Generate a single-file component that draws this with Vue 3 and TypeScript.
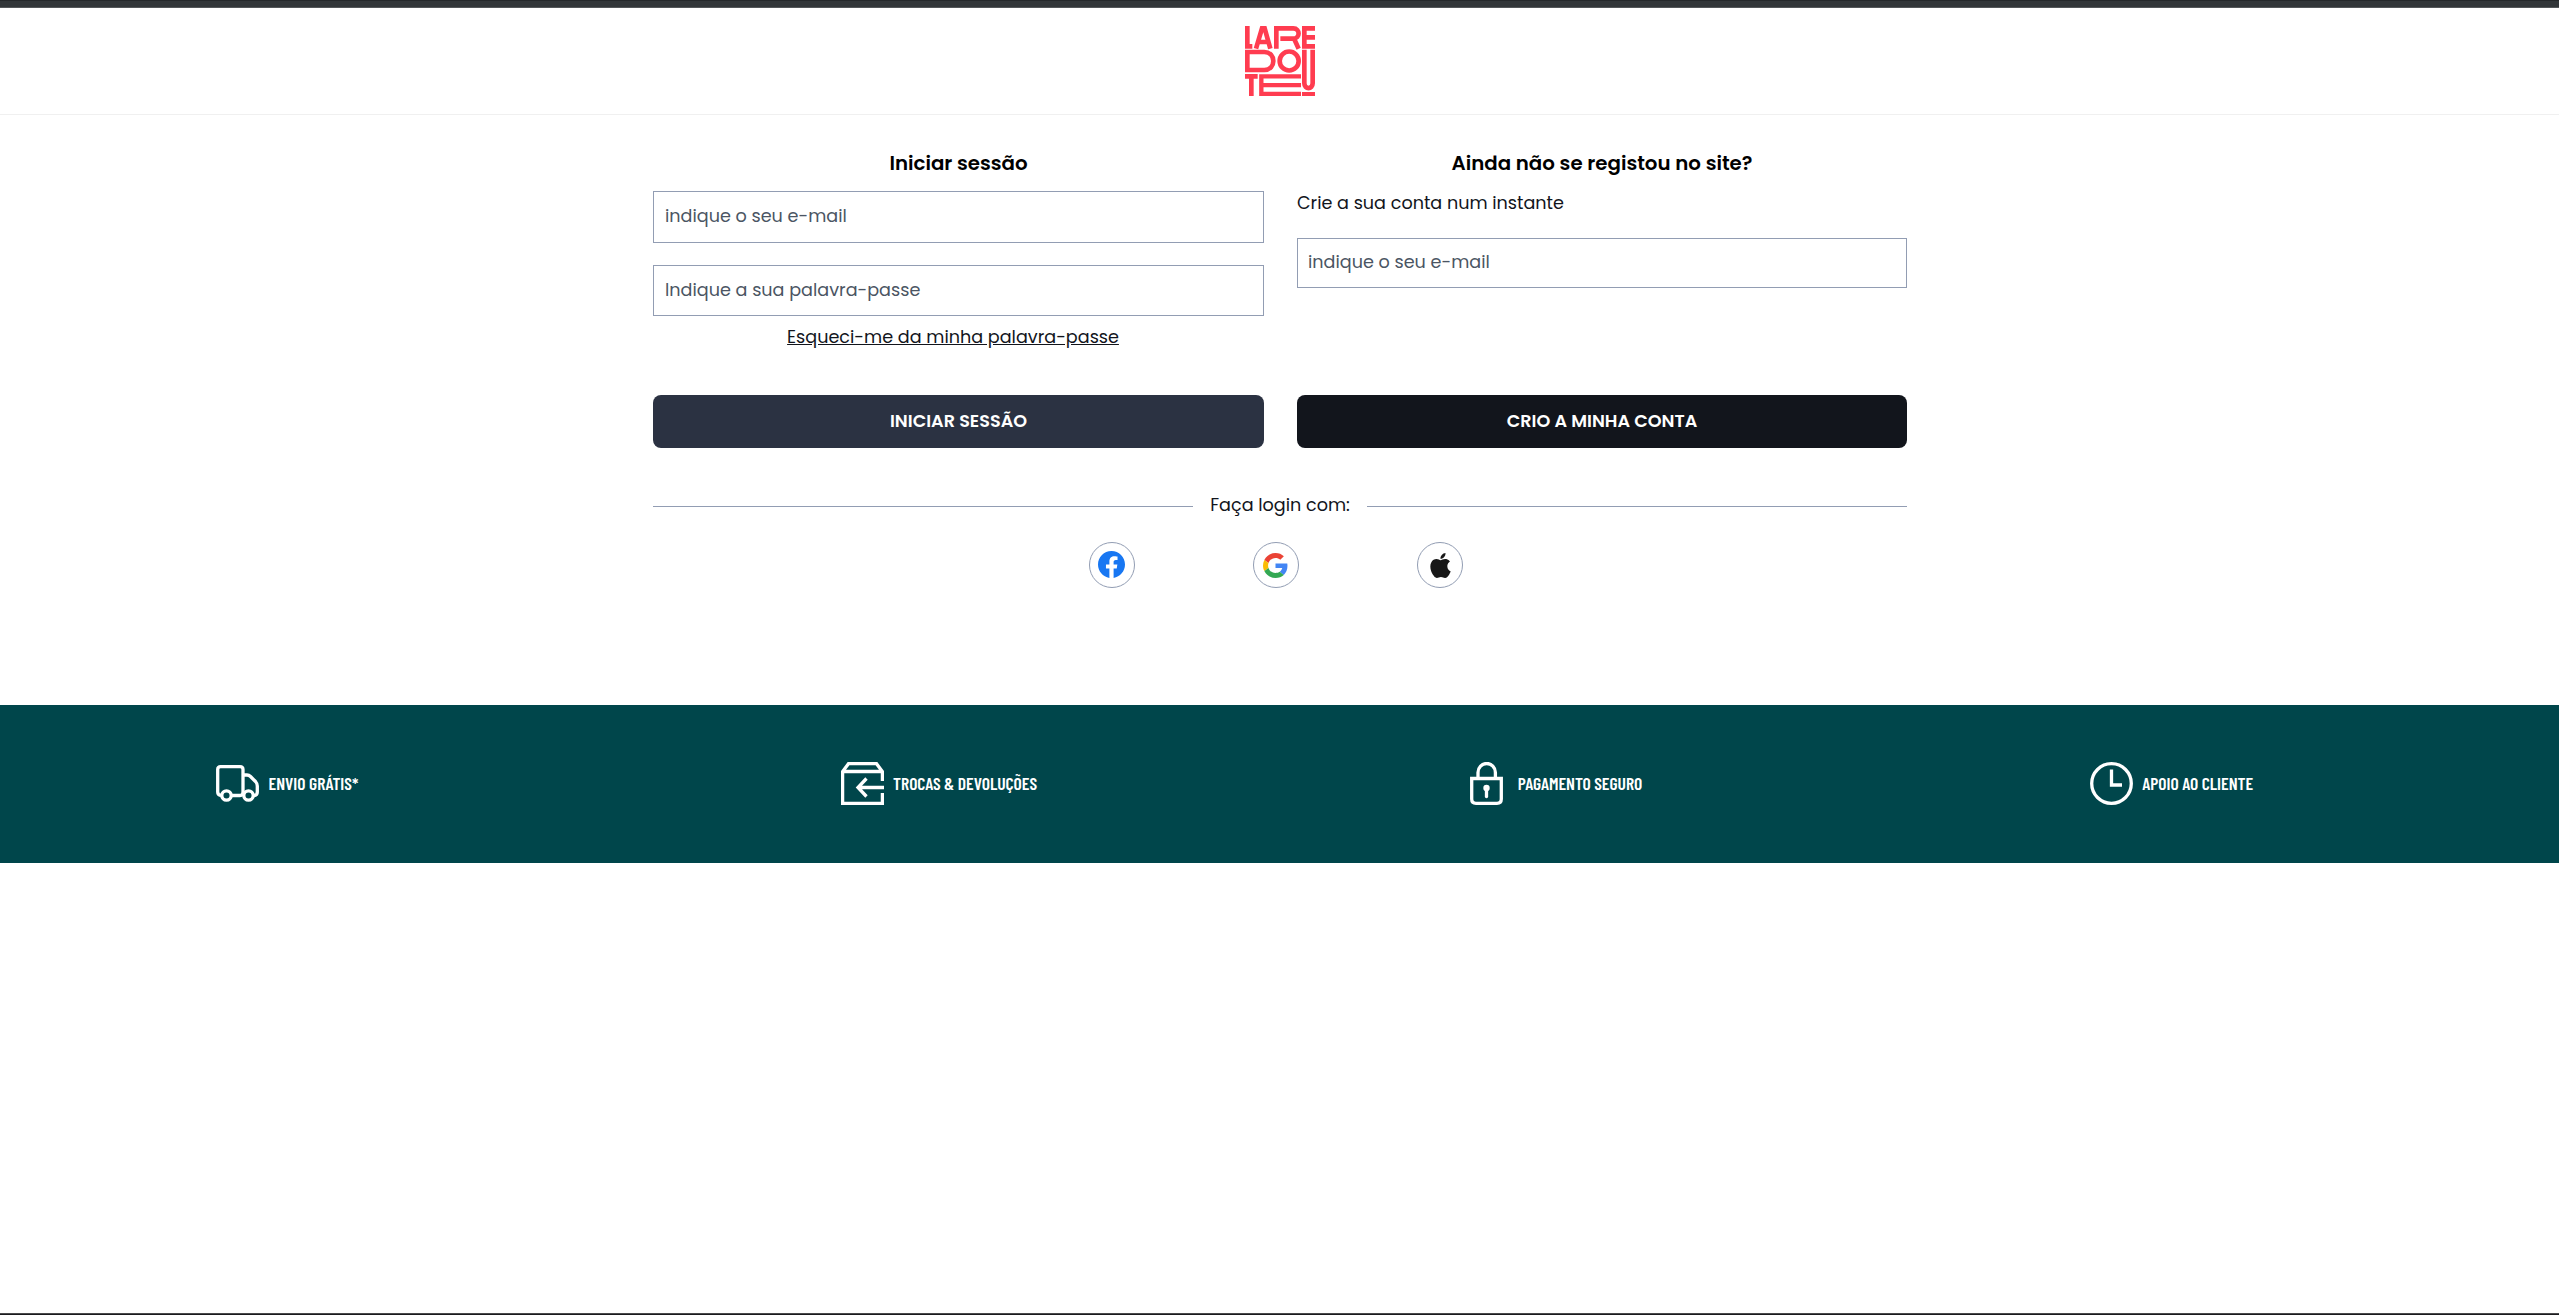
<script setup lang="ts">
import { ref } from 'vue'

const email = ref('')
const password = ref('')
const newEmail = ref('')

type Service = { icon: 'truck' | 'box' | 'lock' | 'clock'; label: string }

const services: Service[] = [
  { icon: 'truck', label: 'ENVIO GRÁTIS*' },
  { icon: 'box', label: 'TROCAS & DEVOLUÇÕES' },
  { icon: 'lock', label: 'PAGAMENTO SEGURO' },
  { icon: 'clock', label: 'APOIO AO CLIENTE' },
]
</script>

<template>
  <div class="page">
    <div class="topbar"></div>
    <header class="header">
      <svg class="logo" viewBox="0 0 210 210" role="img" aria-label="La Redoute">
        <g fill="none" stroke="#ff3c50" stroke-width="14">
          <path d="M7 0V61H22" />
          <path d="M33 68L51 7H59L76 68M39 48H70" />
          <path d="M94 68V7H145C166 7 166 38 145 38H106M148 40L161 68" />
          <path d="M210 7H178V61H210M178 34H210" />
          <path d="M7 78V132H58C94 132 94 78 58 78H7Z" />
          <circle cx="132.500" cy="105" r="28.500" />
          <path d="M178 71V172C178 191 203 191 203 172V71" />
          <path d="M171 204H210" stroke-width="12" />
          <path d="M0 151H38M19 151V210" />
          <path d="M168 151H49V204H168M49 177.500H168" stroke-width="13" />
        </g>
      </svg>
    </header>

    <main class="main">
      <div class="forms">
        <form class="form" @submit.prevent>
          <h2>Iniciar sessão</h2>
          <input v-model="email" class="first" type="email" placeholder="indique o seu e-mail" />
          <input v-model="password" class="second" type="password" placeholder="Indique a sua palavra-passe" />
          <a class="forgot">Esqueci-me da minha palavra-passe</a>
          <button class="login" type="submit">INICIAR SESSÃO</button>
        </form>
        <form class="form" @submit.prevent>
          <h2>Ainda não se registou no site?</h2>
          <p>Crie a sua conta num instante</p>
          <input v-model="newEmail" class="new" type="email" placeholder="indique o seu e-mail" />
          <button type="submit">CRIO A MINHA CONTA</button>
        </form>
      </div>

      <div class="divider"><i></i><span>Faça login com:</span><i></i></div>

      <div class="social">
        <a class="round facebook">
          <svg viewBox="0 0 24 24" width="27" height="27">
            <path fill="#1877f2" d="M24 12.073C24 5.405 18.627 0 12 0S0 5.405 0 12.073C0 18.100 4.388 23.094 10.125 24v-8.437H7.078v-3.490h3.047V9.413c0-3.026 1.792-4.697 4.533-4.697 1.312 0 2.686.236 2.686.236v2.971H15.830c-1.491 0-1.956.930-1.956 1.886v2.264h3.328l-.532 3.490h-2.796V24C19.612 23.094 24 18.100 24 12.073z" />
          </svg>
        </a>
        <a class="round google">
          <svg viewBox="0 0 48 48" width="25" height="25">
            <path fill="#ea4335" d="M24 9.500c3.540 0 6.710 1.220 9.210 3.600l6.850-6.850C35.900 2.380 30.470 0 24 0 14.620 0 6.510 5.380 2.560 13.220l7.980 6.190C12.430 13.720 17.740 9.500 24 9.500z" />
            <path fill="#4285f4" d="M46.980 24.550c0-1.570-.150-3.090-.380-4.550H24v9.020h12.940c-.580 2.960-2.260 5.480-4.780 7.180l7.730 6c4.510-4.180 7.090-10.360 7.090-17.650z" />
            <path fill="#fbbc05" d="M10.530 28.590c-.480-1.450-.760-2.990-.760-4.590s.270-3.140.760-4.590l-7.980-6.190C.920 16.460 0 20.120 0 24c0 3.880.920 7.540 2.560 10.780l7.970-6.190z" />
            <path fill="#34a853" d="M24 48c6.480 0 11.930-2.130 15.890-5.810l-7.730-6c-2.150 1.450-4.920 2.300-8.160 2.300-6.260 0-11.570-4.220-13.470-9.910l-7.980 6.190C6.510 42.620 14.620 48 24 48z" />
          </svg>
        </a>
        <a class="round">
          <svg viewBox="0 0 24 24" width="25" height="25">
            <path fill="#181818" d="M12.152 6.896c-.948 0-2.415-1.078-3.960-1.040-2.040.027-3.910 1.183-4.961 3.014-2.117 3.675-.546 9.103 1.519 12.090 1.013 1.454 2.208 3.090 3.792 3.039 1.520-.065 2.090-.987 3.935-.987 1.831 0 2.350.987 3.960.948 1.637-.026 2.676-1.480 3.676-2.948 1.156-1.688 1.636-3.325 1.662-3.415-.039-.013-3.182-1.221-3.220-4.857-.026-3.040 2.480-4.494 2.597-4.559-1.429-2.090-3.623-2.324-4.390-2.376-2-.156-3.675 1.090-4.610 1.090zM15.530 3.830c.843-1.012 1.400-2.427 1.245-3.830-1.207.052-2.662.805-3.532 1.818-.780.896-1.454 2.338-1.273 3.714 1.338.104 2.715-.688 3.559-1.701" />
          </svg>
        </a>
      </div>
    </main>

    <section class="services">
      <div v-for="s in services" :key="s.icon" class="service">
        <svg viewBox="0 0 43 43" fill="none" stroke="#fff" stroke-width="3.300">
          <g v-if="s.icon === 'truck'">
            <path d="M5 33.500Q1.700 33 1.700 30V7.600Q1.700 4.600 4.700 4.600H24Q27 4.600 27 7.600V30Q27 33.500 24 33.500H16M27 13H31Q33 13 34.500 14.500L39.500 19.500Q41.300 21.500 41.300 24V30Q41.300 33.500 38 33.500" />
            <circle cx="10.500" cy="33.500" r="4.700" />
            <circle cx="32.500" cy="33.500" r="4.700" />
          </g>
          <g v-else-if="s.icon === 'box'">
            <path d="M41.400 19V9.500L35.500 1.700H7.500L1.600 9.500V41.400H41.400V31M1.600 9.500H41.400M43 25.500H17.500M25.500 16.500L17 25.500L25.500 34.500" />
          </g>
          <g v-else-if="s.icon === 'lock'">
            <path d="M6.700 16.500H36.300V37Q36.300 41.300 32 41.300H11Q6.700 41.300 6.700 37ZM13 16.500V10.500A8.700 9 0 0 1 30.400 10.500V16.500" />
            <circle cx="21.500" cy="26" r="3.200" fill="#fff" stroke="none" />
            <path d="M21.500 26V34.500" stroke-linecap="round" />
          </g>
          <g v-else>
            <circle cx="21.500" cy="21.500" r="19.800" />
            <path d="M21.500 7.500V23H32" />
          </g>
        </svg>
        <span>{{ s.label }}</span>
      </div>
    </section>
    <div class="bottom"></div>
  </div>
</template>

<style>
body {
  overflow: hidden;
}
</style>

<style scoped>
.page {
  height: 1315px;
  display: flex;
  flex-direction: column;
  background: #fff;
  color: #12151c;
  font: 17.6px/27px Poppins, Inter, sans-serif;
}
.page * {
  box-sizing: border-box;
}
.topbar {
  flex: none;
  height: 8px;
  background: #323639;
  border-top: 1px solid #25282b;
  border-bottom: 1px solid #54575a;
}
.header {
  flex: none;
  height: 107px;
  border-bottom: 1px solid #f0f0f0;
  display: flex;
  justify-content: center;
  padding-top: 18px;
}
.logo {
  width: 70px;
  height: 70px;
}
.main {
  width: 1254px;
  height: 590px;
  flex: none;
  margin-left: 653px;
  padding-top: 33px;
}
.forms {
  display: grid;
  grid-template-columns: 611px 610px;
  column-gap: 33px;
  height: 300px;
}
.form {
  display: flex;
  flex-direction: column;
}
h2 {
  margin: 0;
  font-size: 19.8px;
  line-height: 30px;
  font-weight: 600;
  text-align: center;
  color: #000;
}
p {
  margin: 12px 0 0;
}
input {
  flex: none;
  border: 1px solid #929db3;
  border-radius: 0;
  padding: 0 11px 2px;
  font: inherit;
  background: #fff;
  outline: none;
}
input::placeholder {
  color: #4b5563;
  opacity: 1;
}
.first {
  height: 52px;
  margin-top: 13px;
}
.second {
  height: 51px;
  margin-top: 22px;
}
.new {
  height: 50px;
  margin-top: 21px;
  padding-left: 10px;
}
.forgot {
  align-self: center;
  margin: 8px 11px 0 0;
  text-decoration: underline;
}
button {
  margin-top: auto;
  height: 53px;
  border: 0;
  border-radius: 8px;
  background: #12151c;
  color: #fff;
  font: 600 17.6px/27px Poppins, Inter, sans-serif;
  padding: 0;
}
button.login {
  background: #2b3242;
}
.divider {
  display: flex;
  align-items: center;
  gap: 17px;
  margin-top: 44px;
}
.divider i {
  flex: 1;
  height: 1px;
  margin-top: 1px;
  background: #929db3;
}
.social {
  display: flex;
  gap: 118px;
  margin: 23px 0 0 436px;
}
.round {
  width: 46px;
  height: 46px;
  border: 1px solid #929db3;
  border-radius: 50%;
  display: flex;
  align-items: center;
  justify-content: center;
}
.facebook {
  padding: 0 1px 1px 0;
}
.google {
  padding-right: 1px;
}
.services {
  flex: none;
  height: 158px;
  background: #00464b;
  display: grid;
  grid-template-columns: repeat(4, 624.6px);
  align-items: center;
  padding: 0 0 2px 216px;
  overflow: hidden;
}
.service {
  display: flex;
  align-items: center;
  gap: 9.500px;
  color: #fff;
  font: 600 17.6px/26px 'Barlow Condensed', 'Roboto Condensed', sans-serif;
  white-space: nowrap;
}
.service svg {
  width: 43px;
  height: 43px;
}
.bottom {
  margin-top: auto;
  height: 2px;
  background: #1b1b1e;
  border-top: 1px solid #4a4a4c;
}
</style>
